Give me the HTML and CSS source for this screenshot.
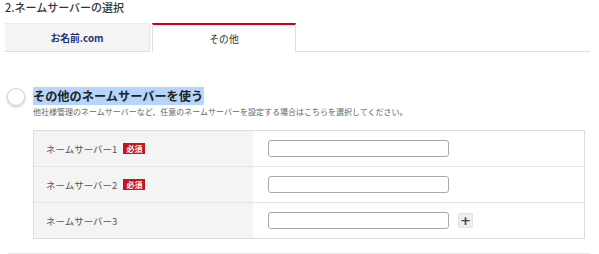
FILE: index.html
```html
<!DOCTYPE html>
<html lang="ja">
<head>
<meta charset="utf-8">
<title>ネームサーバーの選択</title>
<link rel="stylesheet" href="styles.css">
</head>
<body>
<div class="page">
  <h2 class="title">2.ネームサーバーの選択</h2>
  <div class="tabs">
    <div class="tab tab-off">お名前.com</div>
    <div class="tab tab-on">その他</div>
    <div class="tabs-rest"></div>
  </div>
  <div class="choice">
    <span class="radio"></span>
    <div class="choice-body">
      <h3 class="choice-title"><span class="hl">その他のネームサーバーを使う</span></h3>
      <p class="choice-desc">他社様管理のネームサーバーなど、任意のネームサーバーを設定する場合はこちらを選択してください。</p>
      <div class="ns-table">
        <div class="ns-row">
          <div class="ns-label">ネームサーバー1<span class="req">必須</span></div>
          <div class="ns-field"><input class="ns-input" type="text"></div>
        </div>
        <div class="ns-row">
          <div class="ns-label">ネームサーバー2<span class="req">必須</span></div>
          <div class="ns-field"><input class="ns-input" type="text"></div>
        </div>
        <div class="ns-row">
          <div class="ns-label">ネームサーバー3</div>
          <div class="ns-field"><input class="ns-input" type="text"><span class="add">+</span></div>
        </div>
      </div>
    </div>
  </div>
  <div class="divider"></div>
</div>
</body>
</html>
```

FILE: styles.css
```css
* { box-sizing: border-box; }
html, body { margin: 0; padding: 0; background: #fff; }
body {
  font-family: "Noto Sans CJK JP", "Noto Sans", sans-serif;
  color: #333;
  width: 599px;
  height: 254px;
  overflow: hidden;
}
.page { padding: 0 9px 0 5px; }
.title {
  margin: 0;
  font-size: 11px;
  line-height: 15px;
  font-weight: 500;
  color: #333;
}
.tabs {
  display: flex;
  margin-top: 8px;
  height: 29px;
  gap: 2px;
}
.tab {
  display: flex;
  align-items: center;
  justify-content: center;
  font-size: 9.8px;
  width: 145px;
  height: 29px;
}
.tab-off {
  background: #f4f4f4;
  border-top: 1px solid #ececec;
  border-bottom: 1px solid #dedede;
  border-right: 1px solid #e6e6e6;
  color: #1e3378;
  font-weight: 700;
}
.tab-on {
  width: 144px;
  background: #fff;
  border-top: 2px solid #cc0010;
  border-left: 1px solid #e0e0e0;
  border-right: 1px solid #e0e0e0;
  color: #333;
  padding-top: 1px;
}
.tabs-rest {
  flex: 1;
  margin-left: -2px;
  border-bottom: 1px solid #dedede;
}
.choice {
  display: flex;
  margin-top: 36px;
  padding-left: 2px;
}
.radio {
  flex: 0 0 18px;
  width: 18px;
  height: 18px;
  margin-right: 8px;
  border-radius: 50%;
  background: #fff;
  border: 1px solid #d4d4d4;
  box-shadow: 0 1px 3px rgba(0,0,0,0.22);
}
.choice-body { flex: 1; }
.choice-title {
  margin: 0;
  font-size: 12.2px;
  line-height: 16px;
  font-weight: 700;
  color: #222;
}
.hl { background: #b5d5fc; padding-right: 1px; }
.choice-desc {
  margin: 3px 0 0;
  font-size: 8px;
  line-height: 10px;
  color: #666;
}
.ns-table {
  margin-top: 13px;
  width: 552px;
  border: 1px solid #dcdcdc;
}
.ns-row {
  display: grid;
  grid-template-columns: 219px 1fr;
  height: 36px;
  border-top: 1px solid #e4e4e4;
}
.ns-row:first-child { border-top: 0; height: 35px; }
.ns-label {
  display: flex;
  align-items: center;
  background: #f4f4f4;
  padding-left: 12px;
  font-size: 9.5px;
  color: #555;
}
.req {
  display: inline-block;
  margin-left: 6px;
  background: #c4161c;
  color: #fff;
  font-size: 8px;
  font-weight: 700;
  line-height: 11px;
  padding: 0 3px;
}
.ns-field {
  display: flex;
  align-items: center;
  padding-left: 15px;
}
.ns-input {
  width: 181px;
  height: 17px;
  border: 1px solid #a9a9a9;
  border-radius: 3px;
  background: #fff;
  padding: 0 4px;
  margin: 0;
  font-size: 9px;
}
.add {
  display: flex;
  align-items: center;
  justify-content: center;
  width: 15px;
  height: 15px;
  margin-left: 9px;
  background: #efefef;
  border: 1px solid #e2e2e2;
  border-radius: 2px;
  color: #444;
  font-family: "DejaVu Sans", sans-serif;
  font-size: 13px;
  font-weight: 700;
  line-height: 1;
}
.divider {
  margin: 14px 0 0 3px;
  height: 2px;
  background: #e8e8e8;
}
```
